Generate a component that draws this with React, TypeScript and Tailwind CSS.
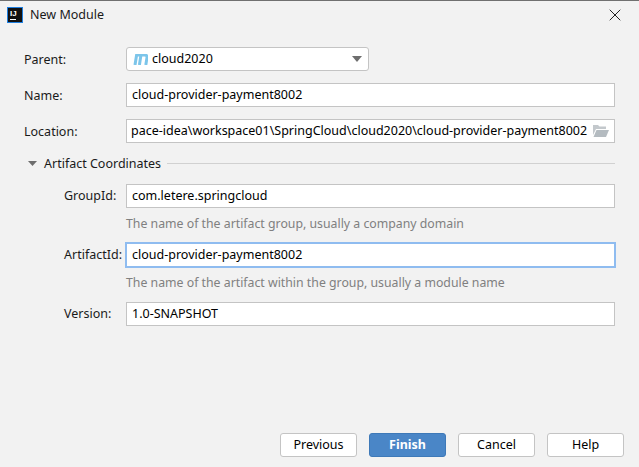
import { X } from "lucide-react";

const font = "font-['Noto_Sans','Open_Sans',sans-serif]";

const Field = ({ value, focused }: { value: string; focused?: boolean }) => (
  <div
    className={
      focused
        ? "h-6 flex-1 flex items-center bg-white pl-[5px] text-[12.5px] text-black border border-[#8fbcf0] outline outline-1 outline-[#8fbcf0]"
        : "h-6 flex-1 flex items-center bg-white pl-[5px] text-[12.5px] text-black border border-[#c4c4c4]"
    }
  >
    {value}
  </div>
);

const FormRow = ({ label, indent, children, className }: { label: string; indent?: boolean; children: React.ReactNode; className?: string }) => (
  <div className={"flex items-center " + (className ?? "")}>
    <div className={indent ? "w-[62px] ml-10 pt-px text-[12.5px] text-[#1a1a1a] whitespace-nowrap" : "w-[102px] pt-[2px] text-[12.5px] text-[#1a1a1a]"}>{label}</div>
    {children}
  </div>
);

const Hint = ({ text, className }: { text: string; className?: string }) => (
  <div className={"ml-[102px] text-[12.3px] leading-[18px] text-[#808080] " + (className ?? "")}>{text}</div>
);

const Btn = ({ label, primary }: { label: string; primary?: boolean }) => (
  <div
    className={
      primary
        ? "w-[77px] h-6 flex items-center justify-center rounded-[3px] bg-[#4a86c7] border border-[#3e79b8] text-white text-[12.5px] font-bold"
        : "w-[77px] h-6 flex items-center justify-center rounded-[3px] bg-white border border-[#c4c4c4] text-[12.5px] text-black"
    }
  >
    {label}
  </div>
);

export default function App() {
  return (
    <div className={"w-[639px] h-[467px] flex flex-col bg-[#f2f2f2] border-t border-[#707070] overflow-hidden " + font}>
      {/* title bar */}
      <div className="h-[28px] flex items-center pl-[7px] pr-[14px]">
        <svg width="16" height="16" viewBox="0 0 16 16" className="shrink-0">
          <rect x="0.5" y="0.5" width="15" height="15" fill="#111" stroke="#1f7fe0" />
          <text x="3" y="9" fontSize="8" fontWeight="700" fill="#fff" fontFamily="Liberation Sans">IJ</text>
          <rect x="3" y="12" width="6" height="1" fill="#fff" />
        </svg>
        <span className="ml-[7px] text-[12.5px] text-[#1a1a1a]">New Module</span>
        <X className="ml-auto text-[#222]" size={20} strokeWidth={1.2} />
      </div>

      <div className="flex flex-col pl-6 pr-6">
        <FormRow label="Parent:" className="mt-[18px]">
          <div className="w-[243px] h-6 flex items-center bg-white border border-[#c4c4c4] rounded-[3px] pl-[6px] pr-[6px] text-[12.5px] text-black">
            <svg width="15" height="11" viewBox="0 0 15 11" className="mr-[4px] shrink-0">
              <path d="M2 11 L3.6 1 H11.5 Q14.4 1 14 3.5 L12.8 11 M7.9 1.5 L6.4 11" fill="none" stroke="#7cc5ea" strokeWidth="3" />
            </svg>
            cloud2020
            <svg width="10" height="6" viewBox="0 0 10 6" className="ml-auto">
              <path d="M0 0h10L5 6z" fill="#6e6e6e" />
            </svg>
          </div>
        </FormRow>
        <FormRow label="Name:" className="mt-3">
          <Field value="cloud-provider-payment8002" />
        </FormRow>
        <FormRow label="Location:" className="mt-3">
          <div className="h-6 w-[489px] flex items-center bg-white border border-[#c4c4c4] text-[12.5px] text-black pl-[4px] pr-[5px]">
            <div className="flex-1 whitespace-nowrap">pace-idea\workspace01\SpringCloud\cloud2020\cloud-provider-payment8002</div>
            <svg width="16" height="12" viewBox="0 0 16 12" className="shrink-0">
              <path d="M0 0h5l1.5 1.5H13V4H3L0 10z" fill="#c3c8cc" />
              <path d="M3.5 5H16l-3 7H0.5z" fill="#b4bbc0" />
            </svg>
          </div>
        </FormRow>

        <div className="flex items-center mt-[13px] h-[14px]">
          <svg width="9" height="5" viewBox="0 0 9 5" className="ml-[4px]">
            <path d="M0 0h9L4.5 5z" fill="#6e6e6e" />
          </svg>
          <span className="ml-[7px] pt-[2px] text-[12.5px] text-[#1a1a1a]">Artifact Coordinates</span>
          <div className="flex-1 h-px bg-[#d1d1d1] ml-[6px]" />
        </div>

        <FormRow label="GroupId:" indent className="mt-[14px]">
          <Field value="com.letere.springcloud" />
        </FormRow>
        <Hint text="The name of the artifact group, usually a company domain" className="mt-[7px]" />
        <FormRow label="ArtifactId:" indent className="mt-[10px]">
          <Field value="cloud-provider-payment8002" focused />
        </FormRow>
        <Hint text="The name of the artifact within the group, usually a module name" className="mt-[7px]" />
        <FormRow label="Version:" indent className="mt-[10px]">
          <Field value="1.0-SNAPSHOT" />
        </FormRow>
      </div>

      <div className="mt-auto mb-[10px] pr-[15px] flex justify-end gap-3">
        <Btn label="Previous" />
        <Btn label="Finish" primary />
        <Btn label="Cancel" />
        <Btn label="Help" />
      </div>
    </div>
  );
}
